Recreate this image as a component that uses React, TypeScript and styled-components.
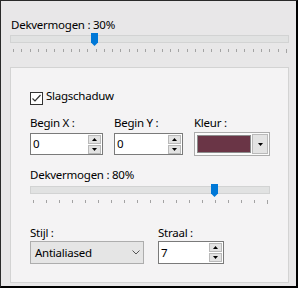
import React from "react";
import styled, { createGlobalStyle } from "styled-components";

const GlobalStyle = createGlobalStyle`
  html, body {
    margin: 0;
    padding: 0;
    background: #e8e7e8;
  }
  body {
    font-family: "Noto Sans", "Segoe UI", sans-serif;
    font-size: 11.5px;
    letter-spacing: -0.25px;
    color: #000;
  }
`;

const Frame = styled.div`
  box-sizing: border-box;
  width: 298px;
  height: 288px;
  border-style: solid;
  border-color: #2a2a2a #000 #000 #2a2a2a;
  border-width: 1px 2px 2px 1px;
  background: #e8e7e8;
  padding: 16px 7px 3px 9px;
  display: flex;
  flex-direction: column;
`;

const Caption = styled.div<{ $indent?: number; $gap?: number }>`
  line-height: 16px;
  white-space: nowrap;
  padding-left: ${(p) => p.$indent ?? 0}px;
  margin-top: ${(p) => p.$gap ?? 0}px;
`;

const SliderBox = styled.div<{ $width: number; $gap?: number }>`
  position: relative;
  width: ${(p) => p.$width}px;
  padding-top: 2px;
  margin-top: ${(p) => p.$gap ?? 0}px;
`;

const Track = styled.div`
  box-sizing: border-box;
  height: 8px;
  background: #e1e2e2;
  border: 1px solid #d2d3d3;
`;

const Ticks = styled.div<{ $left: number; $right: number }>`
  display: flex;
  justify-content: space-between;
  align-items: flex-start;
  height: 4px;
  margin: 6px ${(p) => p.$right}px 0 ${(p) => p.$left}px;
`;

const Tick = styled.span<{ $long?: boolean }>`
  width: 1px;
  height: ${(p) => (p.$long ? 4 : 3)}px;
  background: #a3a3a3;
`;

const Thumb = styled.svg`
  position: absolute;
  top: 0;
`;

const Panel = styled.div`
  flex: 1;
  margin-top: 14px;
  border: 1px solid #d3d3d3;
  background: #f4f3f4;
  padding: 20px 0 0 19px;
`;

const CheckRow = styled.label`
  display: flex;
  align-items: flex-start;
  line-height: 16px;
`;

const CheckBox = styled.span`
  box-sizing: border-box;
  width: 13px;
  height: 13px;
  margin: 4px 3px 0 0;
  border: 1px solid #333;
  background: #fff;
  display: flex;
  align-items: center;
  justify-content: center;
`;

const FieldRow = styled.div<{ $cols: string; $gap: number; $top: number }>`
  display: grid;
  grid-template-columns: ${(p) => p.$cols};
  column-gap: ${(p) => p.$gap}px;
  align-items: start;
  margin-top: ${(p) => p.$top}px;
`;

const Field = styled.div`
  display: flex;
  flex-direction: column;
`;

const SpinBox = styled.div<{ $height: number; $top: number }>`
  box-sizing: border-box;
  height: ${(p) => p.$height}px;
  margin-top: ${(p) => p.$top}px;
  border: 1px solid #7a7a7a;
  background: #fff;
  display: flex;
  align-items: center;
  padding: 0 1px 0 2px;
`;

const SpinValue = styled.span`
  flex: 1;
  line-height: 16px;
`;

const SpinButtons = styled.div`
  display: flex;
  flex-direction: column;
  gap: 1px;
`;

const SpinButton = styled.div`
  box-sizing: border-box;
  width: 13px;
  height: 9px;
  background: #e3e3e3;
  border: 1px solid #b9b9b9;
  display: flex;
  align-items: center;
  justify-content: center;
`;

const ColorPicker = styled.div`
  box-sizing: border-box;
  height: 24px;
  margin-top: 1px;
  border: 1px solid #acacac;
  background: #fbfbfb;
  display: flex;
  align-items: center;
  padding: 0 1px 0 2px;
`;

const Swatch = styled.div<{ $color: string }>`
  box-sizing: border-box;
  width: 55px;
  height: 18px;
  background: ${(p) => p.$color};
  border: 1px solid #8d8d8d;
`;

const DropButton = styled.div`
  box-sizing: border-box;
  width: 16px;
  height: 20px;
  margin-left: 1px;
  background: #e3e3e3;
  border: 1px solid #b9b9b9;
  display: flex;
  align-items: center;
  justify-content: center;
`;

const Select = styled.div`
  box-sizing: border-box;
  height: 23px;
  border: 1px solid #adadad;
  background: #e5e5e5;
  display: flex;
  align-items: center;
  justify-content: space-between;
  padding: 0 3px 0 4px;
  line-height: 16px;
`;

const Arrow = ({ up }: { up?: boolean }) => (
  <svg width="5" height="3" viewBox="0 0 5 3">
    <path d={up ? "M2.5 0 L5 3 L0 3 Z" : "M0 0 L5 0 L2.5 3 Z"} fill="#000" />
  </svg>
);

type SliderProps = {
  width: number;
  ticks: number;
  thumb: number;
  left: number;
  right: number;
  gap?: number;
};

function Slider({ width, ticks, thumb, left, right, gap }: SliderProps) {
  return (
    <SliderBox $width={width} $gap={gap}>
      <Track />
      <Ticks $left={left} $right={right}>
        {Array.from({ length: ticks }, (_, i) => (
          <Tick key={i} $long={i === ticks - 1} />
        ))}
      </Ticks>
      <Thumb width="7" height="13" viewBox="0 0 7 13" style={{ left: thumb }}>
        <path d="M0 0 H7 V9.5 L3.5 13 L0 9.5 Z" fill="#0078d7" />
      </Thumb>
    </SliderBox>
  );
}

function Spin({ value, height, top }: { value: string; height: number; top: number }) {
  return (
    <SpinBox $height={height} $top={top}>
      <SpinValue>{value}</SpinValue>
      <SpinButtons>
        <SpinButton>
          <Arrow up />
        </SpinButton>
        <SpinButton>
          <Arrow />
        </SpinButton>
      </SpinButtons>
    </SpinBox>
  );
}

export default function App() {
  return (
    <>
      <GlobalStyle />
      <Frame>
        <Caption $indent={1}>Dekvermogen : 30%</Caption>
        <Slider width={279} ticks={34} thumb={81} left={3} right={2} />
        <Panel>
          <CheckRow>
            <CheckBox>
              <svg width="11" height="11" viewBox="0 0 11 11">
                <path d="M1.5 5.5 L4 8 L9.5 2" fill="none" stroke="#333" strokeWidth="1.2" />
              </svg>
            </CheckBox>
            Slagschaduw
          </CheckRow>
          <FieldRow $cols="73px 69px 76px" $gap={11} $top={10}>
            <Field>
              <Caption>Begin X :</Caption>
              <Spin value="0" height={22} top={2} />
            </Field>
            <Field>
              <Caption>Begin Y :</Caption>
              <Spin value="0" height={22} top={2} />
            </Field>
            <Field>
              <Caption>Kleur :</Caption>
              <ColorPicker>
                <Swatch $color="#6a3546" />
                <DropButton>
                  <Arrow />
                </DropButton>
              </ColorPicker>
            </Field>
          </FieldRow>
          <Caption $gap={11}>Dekvermogen : 80%</Caption>
          <Slider width={240} ticks={19} thumb={181} left={3} right={2} gap={1} />
          <FieldRow $cols="114px 66px" $gap={14} $top={21}>
            <Field>
              <Caption>Stijl :</Caption>
              <Select>
                Antialiased
                <svg width="8" height="5" viewBox="0 0 8 5">
                  <path d="M0.5 0.5 L4 4 L7.5 0.5" fill="none" stroke="#555" strokeWidth="1" />
                </svg>
              </Select>
            </Field>
            <Field>
              <Caption>Straal :</Caption>
              <Spin value="7" height={23} top={0} />
            </Field>
          </FieldRow>
        </Panel>
      </Frame>
    </>
  );
}
